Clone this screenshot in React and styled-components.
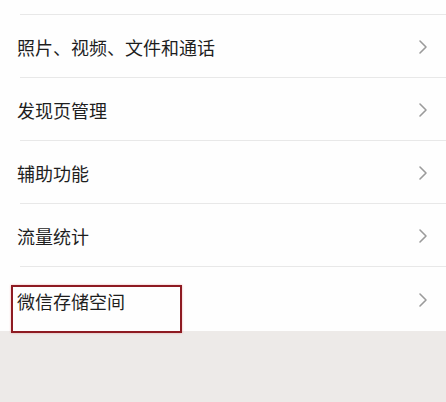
import React from 'react';
import styled, { createGlobalStyle } from 'styled-components';

const GlobalStyle = createGlobalStyle`
  html, body {
    margin: 0;
    padding: 0;
    background: #edeae8;
  }
  body {
    font-family: "Noto Sans CJK SC", "Noto Sans", sans-serif;
  }
`;

const items = [
  { id: 1, title: '照片、视频、文件和通话' },
  { id: 2, title: '发现页管理' },
  { id: 3, title: '辅助功能' },
  { id: 4, title: '流量统计' },
  { id: 5, title: '微信存储空间', marked: true },
];

const Chevron = () => (
  <svg width="10" height="16" viewBox="0 0 10 16">
    <polyline points="2,2 8,8 2,14" fill="none" stroke="#9b9b9b" strokeWidth="1.6" strokeLinecap="round" strokeLinejoin="round" />
  </svg>
);

const App = () => {
  return (
    <>
      <GlobalStyle />
      <Page>
        <List>
          <TopStub />
          {items.map((item) => {
            return (
              <Row key={item.id} $last={item.marked}>
                <Label $marked={item.marked}>{item.title}</Label>
                <Chevron />
              </Row>
            );
          })}
        </List>
        <Footer />
      </Page>
    </>
  );
};

const Page = styled.div`
  width: 446px;
  height: 402px;
  display: flex;
  flex-direction: column;
  overflow: hidden;
`;

const List = styled.ul`
  margin: 0;
  padding: 0;
  list-style: none;
  background: #fefefe;
`;

const TopStub = styled.li`
  height: 14px;
  margin-left: 20px;
  border-bottom: 1px solid #e8e8e8;
`;

const Row = styled.li`
  height: ${(p) => (p.$last ? '64px' : '62px')};
  margin-left: 20px;
  padding-right: 18px;
  display: flex;
  align-items: center;
  justify-content: space-between;
  border-bottom: ${(p) => (p.$last ? 'none' : '1px solid #e8e8e8')};

  svg {
    margin-top: 2px;
  }
`;

const Label = styled.span`
  font-size: 18px;
  line-height: 24px;
  color: #1e1e1e;
  margin-left: -3px;
  padding-top: 2px;

  ${(p) =>
    p.$marked &&
    `
    position: relative;
    z-index: 1;
    align-self: flex-start;
    margin-top: 18px;
    margin-left: -9px;
    padding: 2px 55px 18px 4px;
    border: 2px solid #8e1b22;
    box-shadow: 0 0 2px rgba(220, 80, 80, 0.45);
  `}
`;

const Footer = styled.div`
  flex: 1;
  background: #edeae8;
`;

export default App;
